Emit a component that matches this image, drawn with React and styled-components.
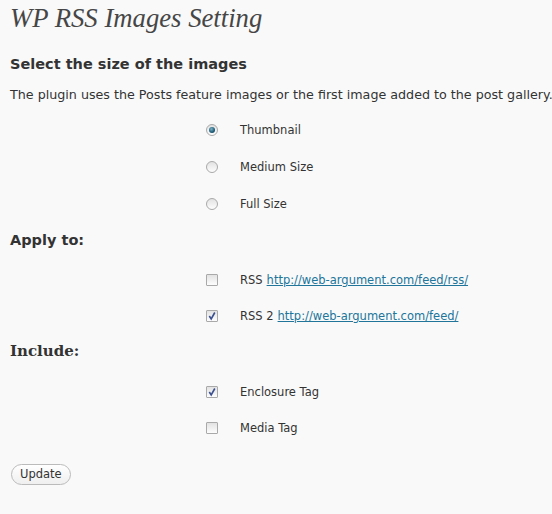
import React from "react";
import styled, { createGlobalStyle } from "styled-components";

const GlobalStyle = createGlobalStyle`
  html, body {
    margin: 0;
    background: #f9f9f9;
  }
  body {
    font-family: "DejaVu Sans", Verdana, sans-serif;
    color: #333;
  }
`;

const Wrap = styled.div`
  padding: 0 0 0 10px;
  width: 552px;
  height: 514px;
  box-sizing: border-box;
  overflow: hidden;
`;

const Title = styled.h2`
  margin: 0;
  padding: 4px 0 0;
  font-family: "Liberation Serif", Georgia, serif;
  font-style: italic;
  font-weight: normal;
  font-size: 26.7px;
  line-height: 29px;
  color: #464646;
`;

const Heading = styled.h3`
  margin: ${(p) => p.$top || 0}px 0 0;
  font-family: ${(p) => (p.$serif ? '"DejaVu Serif", Georgia, serif' : '"DejaVu Sans", Verdana, sans-serif')};
  font-size: ${(p) => (p.$serif ? 15 : 14.5)}px;
  line-height: 20px;
  font-weight: bold;
  color: #333;
`;

const Note = styled.p`
  margin: 12px 0 0;
  font-size: 12.7px;
  line-height: 18px;
  white-space: nowrap;
`;

const Options = styled.div`
  display: flex;
  flex-direction: column;
  gap: ${(p) => p.$gap || 18}px;
  padding-left: 196px;
  margin-top: ${(p) => p.$top || 0}px;
`;

const Option = styled.label`
  display: flex;
  align-items: center;
  height: 18px;
  font-size: 11.5px;
  color: #333;
`;

const Box = styled.span`
  display: inline-block;
  flex: none;
  width: 12px;
  height: 12px;
  box-sizing: border-box;
  border: 1px solid #a9a9a9;
  border-radius: ${(p) => (p.$round ? "50%" : "1px")};
  background: linear-gradient(#e2e2e2, #fdfdfd);
  margin-right: 22px;
  position: relative;
`;

const Dot = styled.span`
  position: absolute;
  left: 2px;
  top: 2px;
  width: 6px;
  height: 6px;
  border-radius: 50%;
  background: radial-gradient(circle at 40% 35%, #7ab3c8, #1d5a75 60%, #0d3a52);
`;

const Link = styled.a`
  color: #21759b;
  text-decoration: underline;
  margin-left: 4px;
`;

const Button = styled.button`
  margin-top: 27px;
  margin-left: 1px;
  font-family: "DejaVu Sans", Verdana, sans-serif;
  font-size: 11.5px;
  color: #333;
  background: linear-gradient(#fff, #efefef);
  border: 1px solid #bbb;
  border-radius: 11px;
  padding: 3px 8px;
  height: 21px;
  line-height: 13px;
  cursor: pointer;
`;

const Check = () => (
  <svg width="10" height="10" viewBox="0 0 10 10" style={{ position: "absolute", left: 0, top: 0 }}>
    <path d="M2.3 5 L4.2 8 L7.8 1.5" fill="none" stroke="#3a4f8f" strokeWidth="1.6" />
  </svg>
);

const Radio = ({ checked }) => <Box $round>{checked && <Dot />}</Box>;
const CheckBox = ({ checked }) => <Box>{checked && <Check />}</Box>;

export default function App() {
  return (
    <Wrap>
      <GlobalStyle />
      <Title>WP RSS Images Setting</Title>
      <Heading $top={21}>Select the size of the images</Heading>
      <Note>The plugin uses the Posts feature images or the first image added to the post gallery.</Note>
      <Options $top={17} $gap={19}>
        <Option><Radio checked />Thumbnail</Option>
        <Option><Radio />Medium Size</Option>
        <Option><Radio />Full Size</Option>
      </Options>
      <Heading $top={17}>Apply to:</Heading>
      <Options $top={21}>
        <Option>
          <CheckBox />RSS<Link href="#">http://web-argument.com/feed/rss/</Link>
        </Option>
        <Option>
          <CheckBox checked />RSS 2<Link href="#">http://web-argument.com/feed/</Link>
        </Option>
      </Options>
      <Heading $top={16} $serif>Include:</Heading>
      <Options $top={22}>
        <Option><CheckBox checked />Enclosure Tag</Option>
        <Option><CheckBox />Media Tag</Option>
      </Options>
      <Button>Update</Button>
    </Wrap>
  );
}
